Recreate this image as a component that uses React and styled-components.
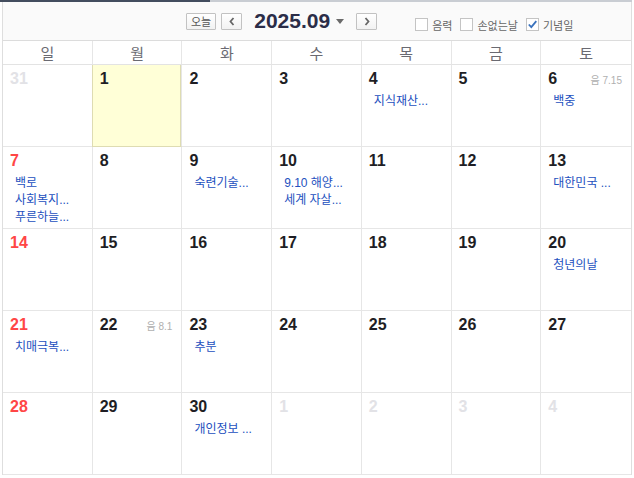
import React from "react";
import styled, { createGlobalStyle } from "styled-components";

const Global = createGlobalStyle`
  html, body { margin: 0; padding: 0; background: #fff; }
  body { font-family: "Liberation Sans", "Noto Sans CJK KR", sans-serif; }
  * { box-sizing: border-box; }
`;

const Frame = styled.div`
  position: relative;
  width: 632px;
  border-top: 2px solid #c9cdd3;
  &::before {
    content: "";
    position: absolute;
    left: 0;
    top: -2px;
    width: 210px;
    height: 2px;
    background: #434d5e;
  }
`;

const Calendar = styled.div`
  margin-left: 2px;
  width: 630px;
  border-left: 1px solid #dedede;
  border-right: 1px solid #dedede;
`;

const Toolbar = styled.div`
  height: 39px;
  background: #fafafa;
  border-bottom: 1px solid #dcdcdc;
  display: flex;
  align-items: center;
  padding-left: 183px;
`;

const NavGroup = styled.div`
  display: flex;
  align-items: center;
`;

const Btn = styled.button`
  height: 17px;
  min-width: ${(p) => (p.$wide ? "30px" : "21px")};
  padding: 0 ${(p) => (p.$wide ? "4px" : "0")};
  margin-right: ${(p) => p.$mr || 0}px;
  border: 1px solid #c2c2c2;
  border-radius: 1px;
  background: linear-gradient(#ffffff, #f2f2f2);
  color: #555;
  font-family: "Noto Sans CJK KR", sans-serif;
  font-size: 11px;
  line-height: 15px;
  display: flex;
  align-items: center;
  justify-content: center;
  cursor: pointer;
`;

const Title = styled.div`
  display: flex;
  align-items: center;
  margin-right: 12px;
  font-family: "Liberation Sans", sans-serif;
  font-weight: bold;
  font-size: 21px;
  line-height: 24px;
  color: #2b2d48;
  letter-spacing: 0;
`;

const Caret = styled.span`
  width: 0;
  height: 0;
  margin-left: 6px;
  margin-top: 1px;
  border-left: 4px solid transparent;
  border-right: 4px solid transparent;
  border-top: 5px solid #6a6a6a;
`;

const Options = styled.div`
  display: flex;
  align-items: center;
  margin-left: 38px;
  margin-top: 7px;
  gap: 8px;
`;

const Option = styled.label`
  display: flex;
  align-items: center;
  gap: 4px;
  font-family: "Noto Sans CJK KR", sans-serif;
  font-size: 11px;
  line-height: 14px;
  color: #666;
`;

const Box = styled.span`
  width: 13px;
  height: 13px;
  border: 1px solid #c4c4c4;
  background: #fff;
  display: flex;
  align-items: center;
  justify-content: center;
`;

const DayNames = styled.div`
  display: grid;
  grid-template-columns: repeat(7, 1fr);
  background: #fff;
`;

const DayName = styled.div`
  height: 24px;
  border-bottom: 1px solid #e3e3e3;
  border-right: ${(p) => (p.$last ? "none" : "1px solid #e6e6e6")};
  text-align: center;
  font-family: "Noto Sans CJK KR", sans-serif;
  font-size: 15px;
  line-height: 23px;
  color: #6a6a72;
`;

const Grid = styled.div`
  display: grid;
  grid-template-columns: repeat(7, 1fr);
  grid-auto-rows: 82px;
`;

const Cell = styled.div`
  border-right: ${(p) => (p.$last ? "none" : "1px solid #e6e6e6")};
  border-bottom: 1px solid ${(p) => (p.$today ? "#dedcb2" : "#e6e6e6")};
  background: ${(p) => (p.$today ? "#ffffd7" : "#fff")};
  box-shadow: ${(p) => (p.$today ? "-1px 0 0 #dedcb2, inset -1px 0 0 #dedcb2" : "none")};
  padding: 4px 9px 0 7px;
  overflow: hidden;
`;

const DateLine = styled.div`
  display: flex;
  justify-content: space-between;
  align-items: center;
  height: 20px;
`;

const DateNum = styled.span`
  font-family: "Liberation Sans", sans-serif;
  font-weight: bold;
  font-size: 16px;
  line-height: 20px;
  color: ${(p) => (p.$other ? "#e2e2e6" : p.$sun ? "#ff4646" : "#1e1e24")};
`;

const Lunar = styled.span`
  font-family: "Liberation Sans", "Noto Sans CJK KR", sans-serif;
  font-size: 10px;
  color: #b0b0b0;
  padding-top: 1px;
`;

const Events = styled.div`
  margin-top: 4px;
  padding-left: 5px;
`;

const Event = styled.div`
  font-family: "Liberation Sans", "Noto Sans CJK KR", sans-serif;
  font-size: 12px;
  line-height: 17px;
  color: #2350be;
  white-space: nowrap;
`;

const Chevron = ({ dir }) => (
  <svg width="8" height="9" viewBox="0 0 8 9">
    <polyline
      points={dir === "left" ? "5.5,1 2.5,4.5 5.5,8" : "2.5,1 5.5,4.5 2.5,8"}
      fill="none"
      stroke="#666"
      strokeWidth="1.8"
    />
  </svg>
);

const Check = () => (
  <svg width="11" height="11" viewBox="0 0 11 11">
    <polyline points="1.8,5.5 4.3,8.2 9.3,2.2" fill="none" stroke="#3a72bd" strokeWidth="1.8" />
  </svg>
);

const weeks = [
  [
    { d: 31, other: true },
    { d: 1, today: true },
    { d: 2 },
    { d: 3 },
    { d: 4, ev: ["지식재산..."] },
    { d: 5 },
    { d: 6, lunar: "7.15", ev: ["백중"] },
  ],
  [
    { d: 7, ev: ["백로", "사회복지...", "푸른하늘..."] },
    { d: 8 },
    { d: 9, ev: ["숙련기술..."] },
    { d: 10, ev: ["9.10 해양...", "세계 자살..."] },
    { d: 11 },
    { d: 12 },
    { d: 13, ev: ["대한민국 ..."] },
  ],
  [
    { d: 14 },
    { d: 15 },
    { d: 16 },
    { d: 17 },
    { d: 18 },
    { d: 19 },
    { d: 20, ev: ["청년의날"] },
  ],
  [
    { d: 21, ev: ["치매극복..."] },
    { d: 22, lunar: "8.1" },
    { d: 23, ev: ["추분"] },
    { d: 24 },
    { d: 25 },
    { d: 26 },
    { d: 27 },
  ],
  [
    { d: 28 },
    { d: 29 },
    { d: 30, ev: ["개인정보 ..."] },
    { d: 1, other: true },
    { d: 2, other: true },
    { d: 3, other: true },
    { d: 4, other: true },
  ],
];

const dayNames = ["일", "월", "화", "수", "목", "금", "토"];

export default function App() {
  return (
    <>
      <Global />
      <Frame>
        <Calendar>
          <Toolbar>
            <NavGroup>
              <Btn $wide $mr={5}>오늘</Btn>
              <Btn $mr={12}>
                <Chevron dir="left" />
              </Btn>
              <Title>
                2025.09
                <Caret />
              </Title>
              <Btn>
                <Chevron dir="right" />
              </Btn>
            </NavGroup>
            <Options>
              <Option>
                <Box />
                음력
              </Option>
              <Option>
                <Box />
                손없는날
              </Option>
              <Option>
                <Box>
                  <Check />
                </Box>
                기념일
              </Option>
            </Options>
          </Toolbar>
          <DayNames>
            {dayNames.map((n, i) => (
              <DayName key={n} $last={i === 6}>
                {n}
              </DayName>
            ))}
          </DayNames>
          <Grid>
            {weeks.map((w, wi) =>
              w.map((c, ci) => (
                <Cell key={`${wi}-${ci}`} $today={c.today} $last={ci === 6}>
                  <DateLine>
                    <DateNum $other={c.other} $sun={ci === 0}>
                      {c.d}
                    </DateNum>
                    {c.lunar && <Lunar>음 {c.lunar}</Lunar>}
                  </DateLine>
                  {c.ev && (
                    <Events>
                      {c.ev.map((e) => (
                        <Event key={e}>{e}</Event>
                      ))}
                    </Events>
                  )}
                </Cell>
              ))
            )}
          </Grid>
        </Calendar>
      </Frame>
    </>
  );
}
